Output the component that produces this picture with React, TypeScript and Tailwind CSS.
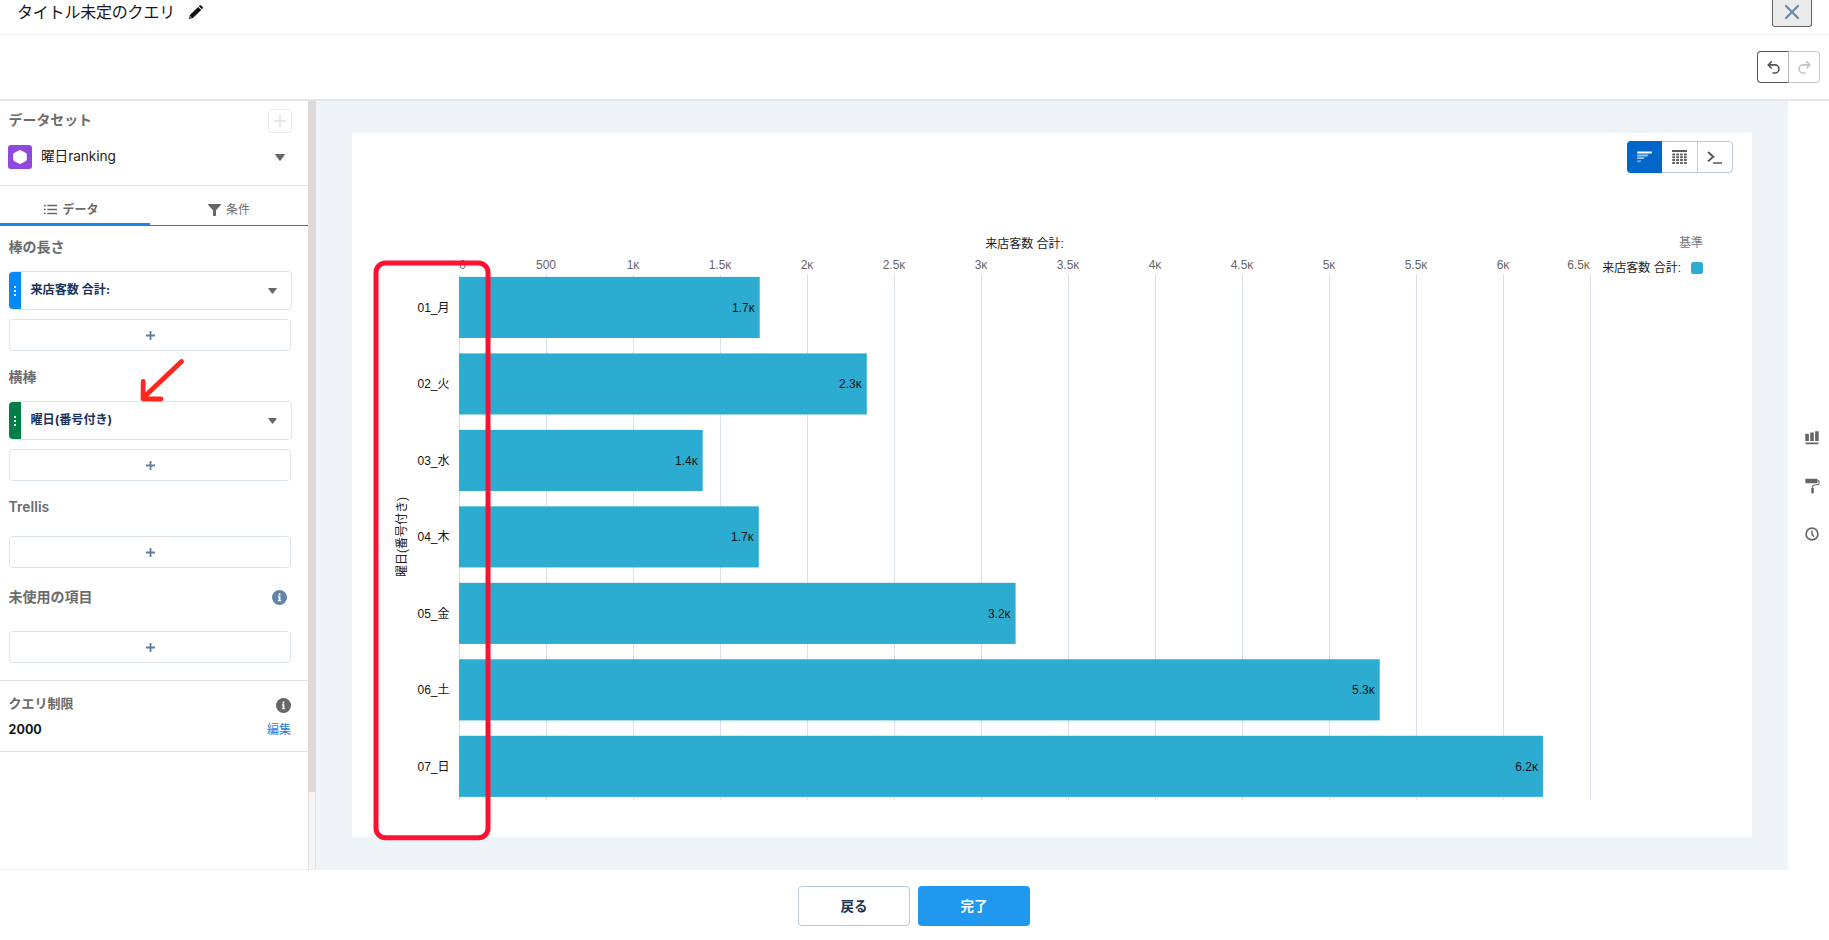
import React from "react";

const FONT = "font-['Inter','Noto_Sans_CJK_JP',sans-serif]";

const bars = [
  { label: "01_月", end: 759.7, value: "1.7" },
  { label: "02_火", end: 866.8, value: "2.3" },
  { label: "03_水", end: 702.7, value: "1.4" },
  { label: "04_木", end: 758.8, value: "1.7" },
  { label: "05_金", end: 1015.6, value: "3.2" },
  { label: "06_土", end: 1379.7, value: "5.3" },
  { label: "07_日", end: 1543, value: "6.2" },
];

const ticks = ["0", "500", "1κ", "1.5κ", "2κ", "2.5κ", "3κ", "3.5κ", "4κ", "4.5κ", "5κ", "5.5κ", "6κ", "6.5κ"];

function Caret({ className }: { className: string }) {
  return (
    <svg className={className} viewBox="0 0 10 7">
      <path d="M0.6 0h8.8q.9 0 .4.8L5.6 6.4q-.6.7-1.2 0L.2.8Q-.3 0 .6 0z" fill="#666" />
    </svg>
  );
}

function PlusBox({ className }: { className: string }) {
  return (
    <div className={`ml-[9px] flex h-8 w-[282px] items-center justify-center rounded border border-[#dde5ec] ${className}`}>
      <svg className="h-[9px] w-[9px]" viewBox="0 0 9 9">
        <path d="M4.5 0v9M0 4.5h9" stroke="#5f7f9f" strokeWidth="1.8" />
      </svg>
    </div>
  );
}

function Pill({ text, strip, className }: { text: string; strip: string; className: string }) {
  return (
    <div className={`ml-[9px] flex h-[39px] w-[283px] items-center rounded border border-[#dde5ec] ${className}`}>
      <div className={`-my-px -ml-px flex h-[37px] w-3 items-center justify-center rounded-l ${strip}`}>
        <svg className="h-[10px] w-[2px]" viewBox="0 0 2 10">
          <path d="M0 0h2v2H0zM0 4h2v2H0zM0 8h2v2H0z" fill="#fff" />
        </svg>
      </div>
      <span className="ml-[9.5px] flex-1 text-[12.1px] font-bold text-[#16325c]">{text}</span>
      <Caret className="mr-[14px] h-[6px] w-[9px]" />
    </div>
  );
}

function Info({ className, color }: { className: string; color: string }) {
  return (
    <svg className={className} viewBox="0 0 15 15">
      <circle cx="7.5" cy="7.5" r="7.5" fill={color} />
      <path d="M6.6 3.6h1.8v1.8H6.6zM5.9 6.3h2.5v3.9h.8v1.1H5.8v-1.1h.8V7.4h-.7z" fill="#fff" />
    </svg>
  );
}

function Title({ children, className }: { children: string; className: string }) {
  return (
    <h3 className={`ml-[8.6px] h-[22px] text-sm leading-[22px] font-semibold text-[#6b6b6b] ${className}`}>{children}</h3>
  );
}

function Sidebar() {
  return (
    <aside className="flex w-[308px] shrink-0 flex-col border-b border-[#eeeeee] bg-white">
      <div className="flex h-[85px] shrink-0 flex-col border-b border-[#dde4ea]">
        <div className="flex h-8 items-start justify-between pl-[8.6px] pr-4 pt-2">
          <span className="text-[13.9px] leading-[23px] font-semibold text-[#6b6b6b]">データセット</span>
          <div className="flex h-6 w-6 shrink-0 items-center justify-center rounded border border-[#ebebeb]">
            <svg className="h-3 w-3" viewBox="0 0 12 12">
              <path d="M6 0v12M0 6h12" stroke="#e8e8e8" strokeWidth="2" />
            </svg>
          </div>
        </div>
        <div className="mt-3 flex h-6 items-center pl-2 pr-[23px]">
          <svg className="h-6 w-6" viewBox="0 0 24 24">
            <rect width="24" height="24" rx="3" fill="#8f49de" />
            <path d="M11.2 5.2q.8-.4 1.6 0l5.2 2.9q.8.4.8 1.3v5.2q0 .9-.8 1.3l-5.2 2.9q-.8.4-1.6 0L6 15.9q-.8-.4-.8-1.3V9.4q0-.9.8-1.3z" fill="#fff" />
          </svg>
          <span className="-mt-[2px] ml-[9px] flex-1 text-[13.7px] leading-5 tracking-[-0.1px] text-[#222]">曜日ranking</span>
          <Caret className="h-[7px] w-[10px]" />
        </div>
      </div>
      <div className="flex h-[40px] shrink-0 text-xs text-[#6b6b6b]">
        <div className="flex w-[150px] items-center justify-center gap-[5px] border-b-[3px] border-[#1b82f0] pt-[10px] pr-[7px]">
          <svg className="h-[11px] w-[13px]" viewBox="0 0 13 11">
            <path d="M3.3 1.5H13M3.3 5.5H13M3.3 9.5H13M0 1.5h1.7M0 5.5h1.7M0 9.5h1.7" stroke="#666" strokeWidth="1.3" />
          </svg>
          <span className="font-semibold">データ</span>
        </div>
        <div className="flex flex-1 items-center justify-center gap-[5px] border-b border-[#666] pt-[8px]">
          <svg className="h-3 w-[13px]" viewBox="0 0 13 12">
            <path d="M.5 0h12q.8.2.3.9L8 6.3v5q0 .7-.7.7H5.7Q5 12 5 11.3v-5L.2.9Q-.3.2.5 0z" fill="#666" />
          </svg>
          <span>条件</span>
        </div>
      </div>
      <Title className="mt-[10px]">棒の長さ</Title>
      <Pill text="来店客数 合計:" strip="bg-[#0089fb]" className="mt-[13px]" />
      <PlusBox className="mt-[9px]" />
      <Title className="mt-[15px]">横棒</Title>
      <Pill text="曜日(番号付き)" strip="bg-[#027e46]" className="mt-[13px]" />
      <PlusBox className="mt-[9px]" />
      <Title className="mt-[15px]">Trellis</Title>
      <PlusBox className="mt-[18px]" />
      <div className="mt-[18px] mr-[21px] flex h-[22px] items-center justify-between">
        <Title className="">未使用の項目</Title>
        <Info className="h-[15px] w-[15px]" color="#6285a5" />
      </div>
      <PlusBox className="mt-[23px]" />
      <div className="mt-[17px] h-[72px] border-y border-[#dde4ea] pr-[17px] pl-[8.6px]">
        <div className="flex items-start justify-between">
          <span className="mt-3 text-[13px] leading-5 font-semibold text-[#6b6b6b]">クエリ制限</span>
          <Info className="mt-[17px] h-[15px] w-[15px]" color="#666" />
        </div>
        <div className="mt-[7px] flex items-center justify-between leading-5">
          <span className="text-[12.5px] font-bold text-[#181818]">2000</span>
          <span className="text-xs text-[#1c7fdc]">編集</span>
        </div>
      </div>
    </aside>
  );
}

function Chart() {
  return (
    <svg className="block h-[704px] w-[1400px]" viewBox="352 133 1400 704" fontFamily="'Liberation Sans','Noto Sans CJK JP',sans-serif" fontSize="12">
      {ticks.map((t, i) => (
        <g key={t}>
          <rect x={459 + i * 87} y="274.5" width="1" height="526" fill="#d8e1e9" />
          <text x={i === 0 ? 462.5 : i === 13 ? 1578.5 : 459 + i * 87} y="269" textAnchor="middle" fill="#666">{t}</text>
        </g>
      ))}
      {bars.map((b, i) => (
        <g key={b.label}>
          <rect x="459" y={276.9 + i * 76.48} width={b.end - 459} height="61.1" fill="#2cacd1" />
          <text x={b.end - 5} y={312 + i * 76.48} textAnchor="end" fill="#111">{b.value}κ</text>
          <text x="449.5" y={312 + i * 76.48} textAnchor="end" fill="#111">{b.label}</text>
        </g>
      ))}
      <text x="1024.5" y="248" textAnchor="middle" fill="#222">来店客数 合計:</text>
      <text x="0" y="0" transform="translate(406 537) rotate(-90)" textAnchor="middle" fill="#222">曜日(番号付き)</text>
      <text x="1703" y="247" textAnchor="end" fill="#777">基準</text>
      <text x="1681" y="272" textAnchor="end" fill="#222">来店客数 合計:</text>
      <rect x="1691" y="262" width="12" height="12" rx="2.5" fill="#2cacd1" />
    </svg>
  );
}

function ViewToggle() {
  return (
    <div className="absolute top-2 right-[19px] flex h-8 w-[106px] rounded border border-[#b8c9da] bg-white">
      <div className="-my-px -ml-px flex w-[35px] items-center justify-center rounded-l bg-[#0067c8]">
        <svg className="h-3 w-[15px]" viewBox="0 0 15 12">
          <path d="M.2.5h14.6v2H.2z" fill="#fff" />
          <path d="M.2 3.5h11.3l-1 2H.2zM.2 6.3H7.5l-1 1.8H.2z" fill="#9cc6ec" />
          <path d="M.2 9.2H4.2l-.8 2H.2z" fill="#6faae2" />
        </svg>
      </div>
      <div className="flex w-[36px] items-center justify-center border-r border-[#b8c9da]">
        <svg className="h-[14px] w-[15px]" viewBox="0 0 15 14">
          <path d="M0 0h15v2H0z" fill="#5a5a5a" />
          <path d="M.3 4.4h15M.3 7.2h15M.3 10.1h15M.3 13h15" stroke="#5f5f5f" strokeWidth="2" strokeDasharray="2.7 1.2" />
        </svg>
      </div>
      <div className="flex flex-1 items-center justify-center">
        <svg className="mr-px h-[13px] w-[15px]" viewBox="0 0 15 13">
          <path d="M1 1l5.3 4.7L1 10.4" fill="none" stroke="#555" strokeWidth="1.9" />
          <path d="M6.5 12h8" stroke="#555" strokeWidth="1.6" strokeLinecap="round" />
        </svg>
      </div>
    </div>
  );
}

export default function App() {
  return (
    <div className={`relative flex h-[940px] w-[1829px] flex-col overflow-hidden bg-white ${FONT}`}>
      <header className="flex h-[35px] shrink-0 items-start border-b border-[#ebf3f9] pl-[17px]">
        <span className="w-[160px] text-base leading-6 tracking-[-0.2px] whitespace-nowrap text-[#181818]">タイトル未定のクエリ</span>
        <svg className="mt-[5px] ml-[12px] h-[14px] w-[14px]" viewBox="0 0 14 14">
          <path d="M0 14l.9-3.9L9.2 1.9l3 3-8.3 8.2z M9.8 1.3l.9-.9q.7-.7 1.4 0l1.6 1.6q.6.7 0 1.3l-.9.9z" fill="#111" />
          <path d="M.9 11.3l1.9 1.9" stroke="#fff" strokeWidth=".7" />
        </svg>
        <div className="flex-1" />
        <button className="mr-[17px] flex h-[27px] w-10 items-start justify-center rounded-b-[3px] border border-t-0 border-[#666] bg-[#ebebeb]">
          <svg className="mt-[5px] h-[14px] w-[14px]" viewBox="0 0 14 14">
            <path d="M1 1l12 12M13 1L1 13" stroke="#6c8eae" strokeWidth="2.4" strokeLinecap="round" />
          </svg>
        </button>
      </header>
      <div className="flex h-[66px] shrink-0 items-start justify-end border-b-2 border-[#e1e7ec] pt-4 pr-[9px]">
        <div className="flex h-8 w-8 items-center justify-center rounded-l border border-[#555] border-r-[#b4b4b4]">
          <svg className="h-[13px] w-[13px]" viewBox="0 0 13 13">
            <path d="M4.3.7L1.2 3.9l3.1 3.1M1.5 3.9h6.4a4 4 0 0 1 0 8.1H6" fill="none" stroke="#555" strokeWidth="1.6" strokeLinecap="round" />
          </svg>
        </div>
        <div className="flex h-8 w-[31px] items-center justify-center rounded-r border border-l-0 border-[#c9c9c9]">
          <svg className="h-[13px] w-[13px]" viewBox="0 0 13 13">
            <path d="M8.7.7l3.1 3.2L8.7 7M11.5 3.9H5.1a4 4 0 0 0 0 8.1H7" fill="none" stroke="#c4c4c4" strokeWidth="1.6" strokeLinecap="round" />
          </svg>
        </div>
      </div>
      <div className="flex h-[769px] shrink-0">
        <Sidebar />
        <div className="flex w-2 shrink-0 flex-col border-b border-[#eeeeee]">
          <div className="h-[691px] bg-[#dddbda]" />
          <div className="flex-1 border-x border-[#e3e3e3] bg-[#f5f5f5]" />
        </div>
        <main className="h-full w-[1472px] shrink-0 bg-[#eef4f8] px-9 pt-8">
          <div className="relative h-[704px] w-[1400px] bg-white">
            <Chart />
            <ViewToggle />
          </div>
        </main>
        <div className="flex flex-1 flex-col items-center pt-[330px] pl-[7px]">
          <svg className="h-[14px] w-[14px]" viewBox="0 0 14 14">
            <path d="M.3 2.8H3.9V10H.3zM5.2 1.5h3.6V10H5.2zM10.1.3h3.6V10h-3.6zM.5 11.5h13v1.8H.5z" fill="#666" />
          </svg>
          <svg className="mt-[33px] h-[16px] w-[15px]" viewBox="0 0 15 16">
            <rect x=".3" y=".7" width="12.3" height="4.6" rx=".7" fill="#666" />
            <path d="M12.8 2.7h1.3v3.6L7.6 7.5v2" fill="none" stroke="#666" strokeWidth="1" />
            <rect x="6.3" y="9.4" width="2.5" height="6" rx=".8" fill="#666" />
          </svg>
          <svg className="mt-[33px] h-[14px] w-[14px]" viewBox="0 0 14 14">
            <circle cx="7" cy="7" r="5.9" fill="none" stroke="#666" strokeWidth="1.6" />
            <path d="M7 4v3.2l1.6 2" fill="none" stroke="#666" strokeWidth="1.4" strokeLinecap="round" />
          </svg>
        </div>
      </div>
      <footer className="flex flex-1 justify-center gap-2 pt-4 text-[13.5px] font-semibold">
        <button className="-ml-[1px] h-10 w-28 rounded border border-[#b8c9da] bg-white text-[#1c3350]">戻る</button>
        <button className="h-10 w-28 rounded bg-[#2098f0] text-white">完了</button>
      </footer>
      <svg className="pointer-events-none absolute top-[258px] left-[371px] h-[585px] w-[122px]" viewBox="371 258 122 585">
        <rect x="376" y="263" width="112" height="574.7" rx="9.5" fill="none" stroke="#ff1133" strokeWidth="5" />
      </svg>
      <svg className="pointer-events-none absolute top-[355px] left-[135px] h-[52px] w-[54px]" viewBox="135 355 54 52">
        <path d="M181.5 361.5L143 398M143.2 381.5L143 398.8L161 399" fill="none" stroke="#ff261d" strokeWidth="4.8" strokeLinecap="round" strokeLinejoin="round" />
      </svg>
    </div>
  );
}
